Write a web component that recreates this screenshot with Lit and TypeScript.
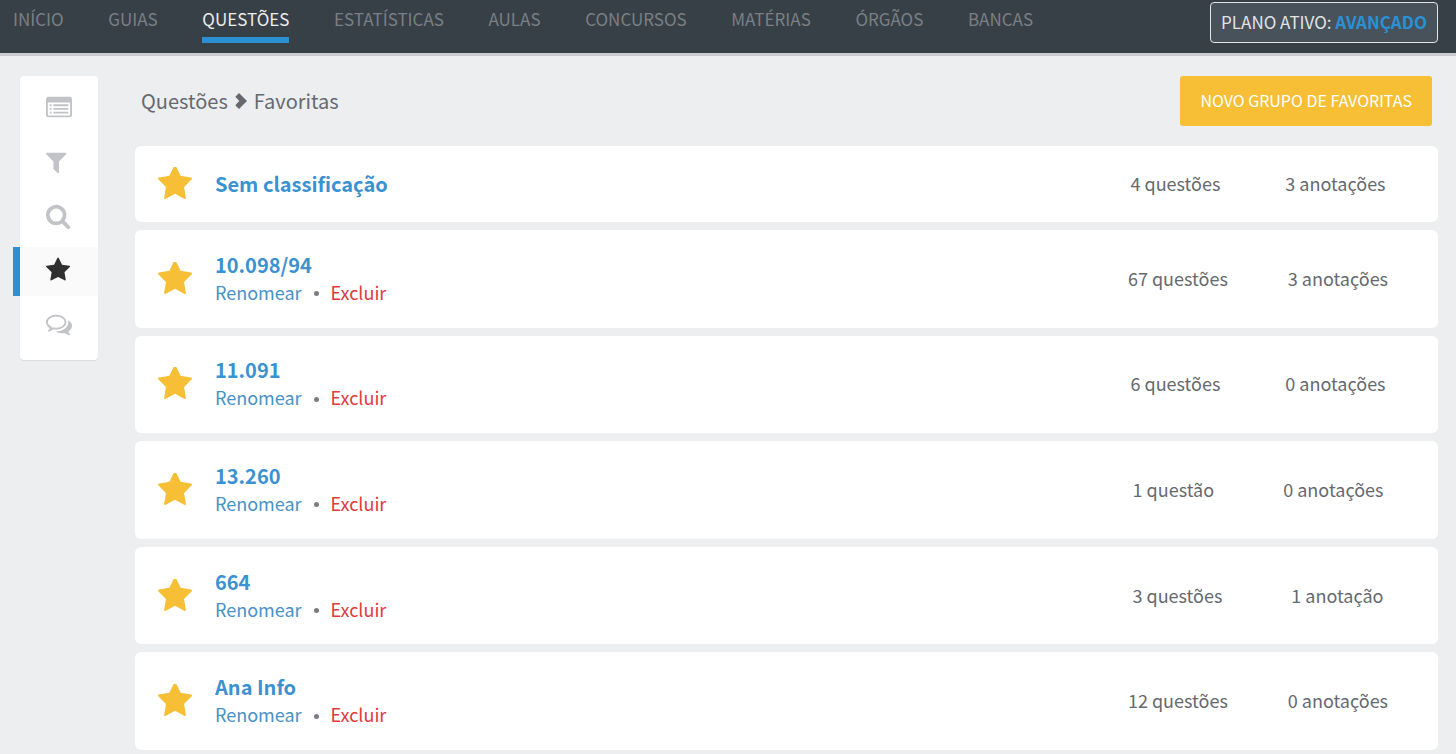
import { LitElement, html, css, svg } from "lit";
import { customElement, property } from "lit/decorators.js";
import { classMap } from "lit/directives/class-map.js";

interface Group {
  name: string;
  questions: string;
  notes: string;
  editable: boolean;
}

const MENU = ["Início", "Guias", "Questões", "Estatísticas", "Aulas", "Concursos", "Matérias", "Órgãos", "Bancas"];

const GROUPS: Group[] = [
  { name: "Sem classificação", questions: "4 questões", notes: "3 anotações", editable: false },
  { name: "10.098/94", questions: "67 questões", notes: "3 anotações", editable: true },
  { name: "11.091", questions: "6 questões", notes: "0 anotações", editable: true },
  { name: "13.260", questions: "1 questão", notes: "0 anotações", editable: true },
  { name: "664", questions: "3 questões", notes: "1 anotação", editable: true },
  { name: "Ana Info", questions: "12 questões", notes: "0 anotações", editable: true },
];

const STAR =
  "M1728 647q0 22-26 48l-363 354 86 500q1 7 1 20 0 21-10.5 35.5t-30.5 14.5q-19 0-40-12l-449-236-449 236q-22 12-40 12-21 0-31.5-14.5t-10.5-35.5q0-6 2-20l86-500-364-354q-25-27-25-48 0-37 56-46l502-73 225-455q19-41 49-41t49 41l225 455 502 73q56 9 56 46z";
const LIST =
  "M1632 128q66 0 113 47t47 113v1088q0 66-47 113t-113 47h-1472q-66 0-113-47t-47-113v-1088q0-66 47-113t113-47zM1664 1376v-832q0-13-9.500-22.500t-22.500-9.500h-1472q-13 0-22.500 9.500t-9.500 22.500v832q0 13 9.500 22.500t22.500 9.500h1472q13 0 22.500-9.500t9.500-22.500zM256 640h128v128h-128zM256 896h128v128h-128zM256 1152h128v128h-128zM512 640h1024v128h-1024zM512 896h1024v128h-1024zM512 1152h1024v128h-1024z";
const FILTER =
  "M1595 295q17 41-14 70l-493 493v742q0 42-39 59-13 5-25 5-27 0-45-19l-256-256q-19-19-19-45v-486l-493-493q-31-29-14-70 17-39 59-39h1280q42 0 59 39z";
const SEARCH =
  "M1216 832q0-185-131.5-316.5t-316.500-131.500-316.500 131.500-131.500 316.500 131.500 316.500 316.500 131.500 316.500-131.500 131.500-316.500zm512 832q0 52-38 90t-90 38q-54 0-90-38l-343-342q-179 124-399 124-143 0-273.500-55.500t-225-150-150-225-55.500-273.500 55.500-273.500 150-225 225-150 273.500-55.500 273.500 55.500 225 150 150 225 55.500 273.500q0 220-124 399l343 343q37 37 37 90z";
const COMMENTS =
  "M704 384q-153 0-286 52t-211.500 141-78.500 191q0 82 53 158t149 132l97 56-35 84q34-20 62-39l44-31 53 10q78 14 153 14 153 0 286-52t211.500-141 78.500-191-78.500-191-211.500-141-286-52zm0-128q191 0 353.500 68.500t256.500 186.500 94 257-94 257-256.500 186.500-353.500 68.500q-86 0-176-16-124 88-278 128-36 9-86 16h-3q-11 0-20.500-8t-11.500-21q-1-3-1-6.500t.5-6.500 2-6l2.500-5 3.500-5.500 4-5 4.500-5 4-4.500q5-6 23-25t26-29.500 22.500-29 25-38.500 20.500-44q-124-72-195-177t-71-224q0-139 94-257t256.500-186.500 353.500-68.500zm822 1169q10 24 20.500 44t25 38.500 22.500 29 26 29.500 23 25q1 1 4 4.500t4.500 5 4 5 3.500 5.500l2.500 5 2 6 .5 6.500-1 6.500q-3 14-13 22t-22 7q-50-7-86-16-154-40-278-128-90 16-176 16-271 0-472-132 58 4 88 4 161 0 309-45t264-129q125-92 192-212t67-254q0-77-23-152 129 71 204 178t75 230q0 120-71 224.500t-195 176.500z";
const CHEVRON = "M4 0L12 8L4 16L0.500 12.500V12L4.300 8L0.500 4V3.500z";

const TOOLS = [
  { label: "Questões", path: LIST, box: "0 0 1792 1792" },
  { label: "Filtros", path: FILTER, box: "192 0 1792 1792" },
  { label: "Pesquisar", path: SEARCH, box: "64 0 1792 1792" },
  { label: "Favoritas", path: STAR, box: "64 0 1792 1792" },
  { label: "Comentários", path: COMMENTS, box: "0 0 1792 1792" },
];

const shape = (d: string) => svg`<path fill="currentColor" fill-rule="evenodd" d=${d}></path>`;

@customElement("favorite-group")
export class FavoriteGroup extends LitElement {
  @property({ attribute: false }) group!: Group;

  static styles = css`
    :host {
      display: flex;
      align-items: center;
      box-sizing: border-box;
      padding: 20px 20px 20px 23px;
      border-radius: 6px;
      background: #fff;
      color: #66696f;
    }
    .star {
      flex: none;
      width: 34px;
      height: 32px;
      margin: 0 23px 2px 0;
      color: #f6bf35;
    }
    .info {
      flex: 1;
      min-width: 0;
    }
    .name {
      margin: 0;
      font-size: 20px;
      font-weight: 700;
      line-height: 28px;
    }
    .name a {
      color: #3a92d0;
    }
    a {
      text-decoration: none;
    }
    .actions {
      display: flex;
      align-items: center;
      gap: 12px;
      padding-bottom: 2px;
      font-size: 18px;
      line-height: 26px;
    }
    .rename {
      color: #4792c6;
    }
    .remove {
      color: #e03a3a;
    }
    .dot {
      width: 5px;
      height: 5px;
      margin-top: 4px;
      border-radius: 50%;
      background: #7b7d82;
    }
    .stats {
      display: flex;
      flex: none;
      width: 320px;
      padding-bottom: 2px;
      font-size: 18px;
      line-height: 26px;
      text-align: center;
      white-space: nowrap;
    }
    .stat {
      flex: 1 1 auto;
    }
  `;

  render() {
    const g = this.group;
    return html`
      <svg class="star" viewBox="64 109 1664 1511" preserveAspectRatio="none" aria-hidden="true">${shape(STAR)}</svg>
      <div class="info">
        <h2 class="name"><a href="#grupo">${g.name}</a></h2>
        ${g.editable
          ? html`<div class="actions">
              <a class="rename" href="#renomear">Renomear</a>
              <span class="dot"></span>
              <a class="remove" href="#excluir">Excluir</a>
            </div>`
          : null}
      </div>
      <div class="stats">
        <span class="stat">${g.questions}</span>
        <span class="stat">${g.notes}</span>
      </div>
    `;
  }
}

@customElement("app-root")
export class AppRoot extends LitElement {
  static styles = css`
    :host {
      display: flex;
      flex-direction: column;
      min-height: 100vh;
      background: #edeef0;
      color: #66696f;
      font-family: "Noto Sans CJK JP", "Noto Sans", sans-serif;
    }
    a {
      color: inherit;
      text-decoration: none;
    }
    .top {
      display: flex;
      justify-content: space-between;
      align-items: flex-start;
      padding: 2px 18px 10px 13px;
      border-bottom: 3px solid #cbccd0;
      background: #384047;
      text-transform: uppercase;
      white-space: nowrap;
    }
    .menu {
      color: #7b7f86;
      font-size: 16px;
      line-height: 33px;
    }
    .link {
      display: inline-block;
      margin-right: 41px;
      padding-bottom: 2px;
      border-bottom: 6px solid transparent;
      font-size: 17px;
      vertical-align: top;
    }
    .link.current {
      border-color: #2b90d4;
      color: #eceded;
    }
    .plan {
      padding: 0 10px 2px;
      border: 1px solid #e2e4e6;
      border-radius: 4px;
      background: #48525a;
      color: #e2e3e5;
      font-size: 17px;
      line-height: 37px;
    }
    .plan strong {
      color: #2b90d4;
    }
    .page {
      display: flex;
      flex: 1;
      align-items: flex-start;
      gap: 37px;
      padding: 20px 18px 4px 20px;
    }
    .tools {
      display: flex;
      flex: none;
      flex-direction: column;
      gap: 5px;
      width: 78px;
      box-sizing: border-box;
      padding: 9px 0 10px;
      border-radius: 4px;
      background: #fff;
      box-shadow: 0 1px 1px #d9dadd;
    }
    .tool {
      padding: 10px 26px 13px;
      color: #c2c3c7;
    }
    .tool.current {
      margin-left: -7px;
      border-left: 7px solid #2b90d4;
      background: #fafafa;
      color: #303030;
    }
    .icon {
      display: block;
      width: 26px;
      height: 26px;
      overflow: visible;
    }
    .content {
      display: flex;
      flex: 1;
      flex-direction: column;
      align-self: stretch;
      gap: 20px;
      min-width: 0;
    }
    .head {
      display: flex;
      justify-content: space-between;
      align-items: center;
      padding: 0 6px;
    }
    .crumbs {
      display: flex;
      align-items: center;
      gap: 7px;
      font-size: 20px;
      line-height: 28px;
    }
    .chevron {
      width: 12px;
      height: 16px;
    }
    .create {
      padding: 0 20px 2px;
      border: 0;
      border-radius: 3px;
      background: #f6bf35;
      color: #fff;
      font: inherit;
      font-size: 16px;
      line-height: 48px;
      text-transform: uppercase;
      white-space: nowrap;
    }
    .list {
      display: flex;
      flex: 1;
      flex-direction: column;
      gap: 8px;
    }
    .group {
      min-height: 76px;
    }
    .group.editable {
      flex: 1 0 auto;
    }
  `;

  render() {
    return html`
      <header class="top">
        <nav class="menu" aria-label="Principal">
          ${MENU.map(
            (m) => html`<a class=${classMap({ link: true, current: m === "Questões" })} href="#menu">${m}</a> `
          )}
        </nav>
        <a class="plan" href="#plano">Plano ativo: <strong>Avançado</strong></a>
      </header>
      <div class="page">
        <nav class="tools" aria-label="Questões">
          ${TOOLS.map(
            (t) => html`<a
              class=${classMap({ tool: true, current: t.label === "Favoritas" })}
              href="#ferramenta"
              aria-label=${t.label}
              ><svg class="icon" viewBox=${t.box} aria-hidden="true">${shape(t.path)}</svg></a
            >`
          )}
        </nav>
        <main class="content">
          <div class="head">
            <nav class="crumbs" aria-label="Caminho">
              <a href="#questoes">Questões</a>
              <svg class="chevron" viewBox="0 0 12 16" aria-hidden="true">${shape(CHEVRON)}</svg>
              <span>Favoritas</span>
            </nav>
            <button class="create" type="button">Novo grupo de favoritas</button>
          </div>
          <div class="list">
            ${GROUPS.map(
              (g) => html`<favorite-group
                class=${classMap({ group: true, editable: g.editable })}
                .group=${g}
              ></favorite-group>`
            )}
          </div>
        </main>
      </div>
    `;
  }
}
